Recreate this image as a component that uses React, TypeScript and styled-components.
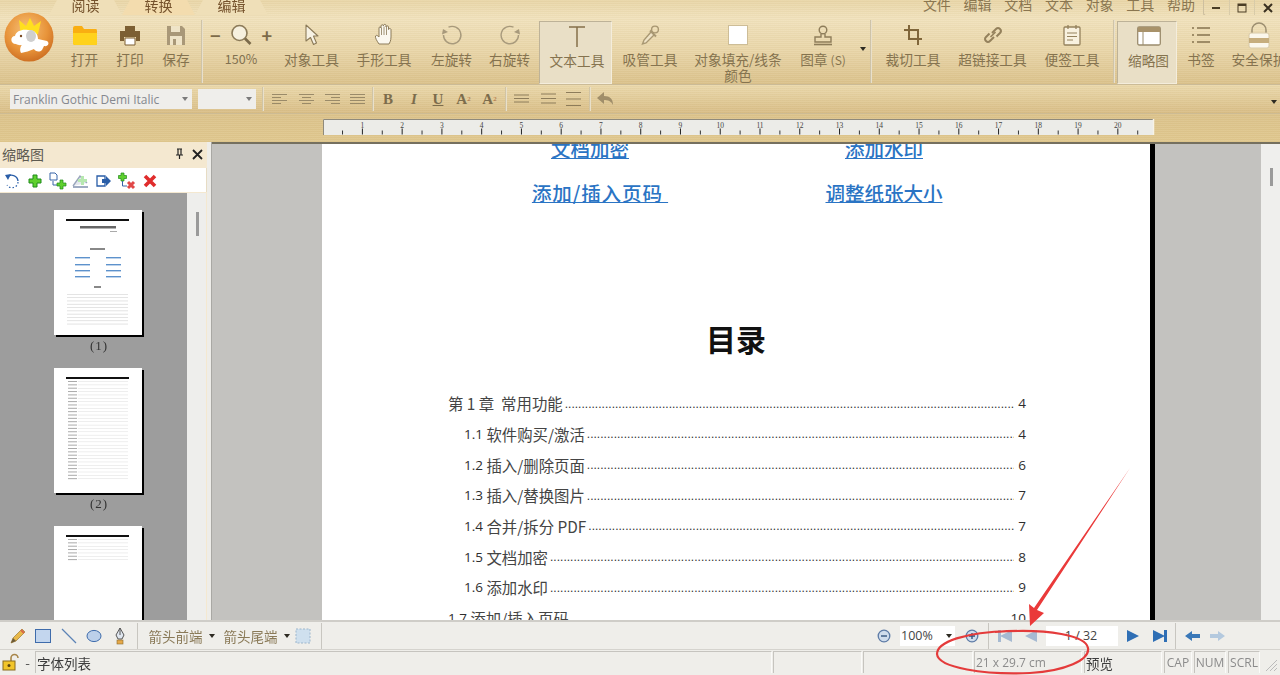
import React from "react";
import styled, { createGlobalStyle } from "styled-components";

const Global = createGlobalStyle`
  html, body { margin: 0; padding: 0; background: #efeeea; }
  body { font-family: "Noto Sans CJK SC", "Noto Sans", sans-serif; }
  * { box-sizing: border-box; }
`;

const App_ = styled.div`
  position: relative;
  width: 1280px;
  height: 675px;
  overflow: hidden;
  display: flex;
  flex-direction: column;
  filter: blur(0.45px);
`;

const stripes = `repeating-linear-gradient(180deg, rgba(255,255,255,.05) 0 1px, rgba(120,90,30,.03) 1px 2px)`;

const Ribbon = styled.div`
  height: 85px;
  flex: none;
  background: ${stripes}, linear-gradient(180deg, #e9d6a8 0%, #f1e2bd 22%, #e9d6a9 60%, #dbc28c 100%);
  border-bottom: 1px solid #cbbb97;
`;

const TabRow = styled.div`
  height: 15px;
  display: flex;
  overflow: hidden;
  padding-left: 49px;
`;

const Tab = styled.div<{ $active?: boolean }>`
  width: 73px;
  height: 15px;
  line-height: 11px;
  text-align: center;
  font-size: 14px;
  color: #75522c;
  clip-path: polygon(0 100%, 8px 0, calc(100% - 8px) 0, 100% 100%);
  background: ${(p) => (p.$active ? "#f3dcae" : "#efdfb8")};
`;

const TopMenu = styled.div`
  margin-left: auto;
  display: flex;
  gap: 12.7px;
  font-size: 14px;
  line-height: 8px;
  color: #8a7650;
  padding-right: 8px;
`;

const WindowButtons = styled.div`
  width: 77px;
  height: 16px;
  display: flex;
  border: 1px solid #cdbf9f;
  border-top: 0;
  border-right: 0;
  border-radius: 0 0 0 3px;
`;

const WindowButton = styled.div`
  flex: 1;
  display: flex;
  align-items: center;
  justify-content: center;
  border-right: 1px solid #d8cba9;
  &:last-child { border-right: 0; }
`;

const Tools = styled.div`
  height: 69px;
  display: flex;
`;

const LogoCell = styled.div`
  width: 62px;
  flex: none;
  margin-top: -3px;
  padding-left: 4px;
`;

const Tool = styled.div<{ $w: number; $active?: boolean }>`
  width: ${(p) => p.$w}px;
  flex: none;
  display: flex;
  flex-direction: column;
  align-items: center;
  padding-top: 6px;
  font-size: 13.7px;
  color: #85734f;
  white-space: nowrap;
  ${(p) =>
    p.$active
      ? `background: #e9dfc6; margin-top: 6px; border: 1.5px solid; border-color: #bdb298 #f4eddc #f4eddc #bdb298; height: 63px; padding: 0 0 0 3px;`
      : ""}
`;

const ToolIcon = styled.div`
  height: 28px;
  display: flex;
  align-items: center;
  justify-content: center;
  flex: none;
`;

const ToolLabel = styled.div`
  line-height: 16px;
  margin-top: 2px;
  text-align: center;
`;

const SmallLabelPart = styled.span`
  font-size: 12px;
`;

const ZoomLine = styled.div`
  width: 62px;
  display: flex;
  align-items: center;
  justify-content: space-between;
  font-size: 18px;
  font-weight: 700;
  color: #7d6b4a;
`;

const Percent = styled.div`
  font-size: 12.5px;
  line-height: 16px;
  margin-top: 2px;
  color: #80704f;
`;

const Divider = styled.div<{ $m?: string }>`
  width: 2px;
  flex: none;
  margin: ${(p) => p.$m || "4px 0 2px"};
  background: linear-gradient(90deg, #c2b595, #f5eedd);
`;

const Caret = styled.div`
  width: 0;
  height: 0;
  flex: none;
  border: 3px solid transparent;
  border-top: 4px solid #2d2a22;
  border-bottom: 0;
`;

const CaretCell = styled.div<{ $w: number }>`
  width: ${(p) => p.$w}px;
  flex: none;
  display: flex;
  justify-content: center;
  padding-top: 32px;
`;

const FormatBar = styled.div`
  height: 29px;
  flex: none;
  display: flex;
  align-items: center;
  padding-left: 10px;
  background: ${stripes}, linear-gradient(180deg, #ebd9ac, #d9be87);
  border-bottom: 1px solid #cdbb93;
`;

const SelectBox = styled.div<{ $w: number }>`
  width: ${(p) => p.$w}px;
  height: 20px;
  flex: none;
  display: flex;
  align-items: center;
  justify-content: space-between;
  padding: 0 4px 0 3px;
  background: #efeeeb;
  font: 12px "Open Sans", sans-serif;
  color: #85888f;
  white-space: nowrap;
  margin-right: 6px;
  ${Caret} { border-top-color: #7b7b7b; }
`;

const FormatSep = styled.div<{ $ml?: number }>`
  width: 2px;
  height: 24px;
  flex: none;
  margin-left: ${(p) => p.$ml ?? 0}px;
  background: linear-gradient(90deg, #c4b692, #f5eedd);
`;

const FormatBtn = styled.div<{ $w: number }>`
  width: ${(p) => p.$w}px;
  flex: none;
  display: flex;
  align-items: center;
  justify-content: center;
  font: 700 15px "Liberation Serif", serif;
  color: #7c6c4c;
  sup, sub { font-size: 7px; font-weight: 400; color: #a8683d; line-height: 0; }
`;

const FormatEnd = styled.div`
  margin-left: auto;
  padding: 6px 3px 0 0;
`;

const RulerStrip = styled.div`
  height: 28px;
  flex: none;
  padding: 5px 0 0 323px;
  background: ${stripes}, linear-gradient(180deg, #dcc38c, #e0c88f);
`;

const Body = styled.div`
  height: 478px;
  flex: none;
  display: flex;
  overflow: hidden;
`;

const Side = styled.div`
  width: 207px;
  flex: none;
  display: flex;
  flex-direction: column;
  background: #f4e8d0;
`;

const SideHead = styled.div`
  height: 26px;
  flex: none;
  display: flex;
  align-items: center;
  padding: 0 4px 2px 2px;
  font-size: 14px;
  color: #5d5a50;
`;

const SideHeadBtns = styled.div`
  margin-left: auto;
  display: flex;
  align-items: center;
  gap: 8px;
`;

const SideTools = styled.div`
  height: 24px;
  flex: none;
  display: flex;
  align-items: center;
  background: #fff;
  border-right: 1px solid #e7dcc4;
  margin-bottom: 1px;
  padding-top: 1px;
`;

const SideTool = styled.div`
  width: 23px;
  flex: none;
  display: flex;
  justify-content: center;
`;

const SideContent = styled.div`
  flex: 1;
  display: flex;
  min-height: 0;
`;

const ThumbList = styled.div`
  width: 187px;
  flex: none;
  background: #9d9d9d;
  overflow: hidden;
  display: flex;
  flex-direction: column;
  align-items: center;
  padding: 17px 0 0 11px;
`;

const Thumb = styled.div`
  width: 90px;
  height: 127px;
  flex: none;
  padding: 0 2px 2px 0;
  background: linear-gradient(#000, #000) 2px 2px / 100% 100% no-repeat;
  line-height: 0;
`;

const ThumbInner = styled.svg`
  display: block;
  background: #fff;
`;

const ThumbLabel = styled.div`
  height: 31px;
  width: 90px;
  flex: none;
  text-align: center;
  letter-spacing: 1px;
  font: 13px/18px "Liberation Serif", "Noto Sans CJK SC", serif;
  color: #333;
`;

const SideScroll = styled.div`
  width: 19px;
  flex: none;
  background: #eeeeec;
  padding: 19px 0 0 9px;
`;

const ScrollThumb = styled.div`
  width: 3px;
  height: 24px;
  background: #9a9a9a;
`;

const Splitter = styled.div`
  width: 5px;
  flex: none;
  background: #eeede9;
  border-right: 1px solid #a9a8a4;
`;

const Main = styled.div`
  flex: 1;
  display: flex;
  border-top: 2px solid #75705f;
  min-width: 0;
`;

const DocArea = styled.div`
  flex: 1;
  background: #c3c2bf;
  padding-left: 110px;
  overflow: hidden;
`;

const DocPage = styled.div`
  width: 833px;
  height: 100%;
  background: #fff;
  border-right: 5px solid #000;
  overflow: hidden;
`;

const LinkGrid = styled.div`
  display: grid;
  grid-template-columns: 296px 292px;
  row-gap: 16px;
  margin: -9px 0 0 120px;
`;

const DocLink = styled.div<{ $shift?: boolean }>`
  height: 28px;
  line-height: 27px;
  text-align: center;
  font-size: 19.5px;
  font-weight: 500;
  color: #2a74c4;
  text-decoration: underline;
  white-space: pre;
  ${(p) => (p.$shift ? "padding-left: 20px; letter-spacing: 0.9px;" : "")}
`;

const DocTitle = styled.div`
  height: 40px;
  margin-top: 111px;
  text-align: center;
  line-height: 40px;
  font-size: 30px;
  font-weight: 700;
  color: #111;
`;

const Toc = styled.div`
  margin: 30px 0 0 126px;
  width: 578px;
`;

const TocRow = styled.div<{ $indent?: boolean }>`
  height: 30.65px;
  display: flex;
  align-items: center;
  padding-left: ${(p) => (p.$indent ? 16 : 0)}px;
  font-size: 15.4px;
  font-weight: 400;
  color: #444;
  white-space: pre;
`;

const TocNum = styled.span`
  font-family: "Open Sans", sans-serif;
  font-weight: 400;
  font-size: 13.5px;
  color: #2e2e2e;
`;

const Leader = styled.div`
  flex: 1;
  min-width: 0;
  overflow: hidden;
  margin: 0 4px 0 2px;
  font: 12px "Liberation Sans", sans-serif;
  color: #333;
  letter-spacing: 0.02px;
  padding-top: 1px;
`;

const DocScroll = styled.div`
  width: 19px;
  flex: none;
  background: #efefed;
  padding: 24px 0 0 9px;
`;

const DocScrollThumb = styled.div`
  width: 3px;
  height: 18px;
  background: #9a9a9a;
`;

const BottomBar = styled.div`
  height: 30px;
  flex: none;
  display: flex;
  align-items: center;
  padding: 0 51px 0 5px;
  background: #efeeea;
  border-top: 2px solid #cfcdc8;
  border-bottom: 1px solid #d5d3ce;
`;

const BarIcon = styled.div<{ $w?: number }>`
  width: ${(p) => p.$w || 25.5}px;
  flex: none;
  display: flex;
  align-items: center;
  justify-content: center;
`;

const BarSep = styled.div<{ $m?: string }>`
  width: 1px;
  height: 26px;
  flex: none;
  margin: ${(p) => p.$m || "0"};
  background: #c8c6c0;
`;

const BarText = styled.div<{ $w: number; $ml: number }>`
  width: ${(p) => p.$w}px;
  flex: none;
  margin-left: ${(p) => p.$ml}px;
  display: flex;
  align-items: center;
  justify-content: space-between;
  font-size: 13.5px;
  color: #8a7a58;
  white-space: nowrap;
`;

const BarSpacer = styled.div`
  flex: 1;
`;

const WhiteField = styled.div<{ $w: number; $center?: boolean; $m?: string }>`
  width: ${(p) => p.$w}px;
  height: 20px;
  flex: none;
  display: flex;
  align-items: center;
  justify-content: ${(p) => (p.$center ? "center" : "space-between")};
  padding: 0 3px 0 1px;
  margin: ${(p) => p.$m || "0"};
  background: #fff;
  font: 12.5px "Open Sans", sans-serif;
  color: #444;
`;

const StatusBar = styled.div`
  height: 24px;
  flex: none;
  display: flex;
  align-items: center;
  padding-left: 2px;
  background: #efeeea;
  font-size: 13.5px;
`;

const StatusLock = styled.div`
  width: 18px;
  flex: none;
  display: flex;
`;

const StatusDash = styled.div`
  width: 15px;
  flex: none;
  color: #555;
  text-align: center;
`;

const StatusCell = styled.div<{ $w: number; $m?: number; $muted?: boolean; $center?: boolean }>`
  width: ${(p) => p.$w}px;
  height: 22px;
  flex: none;
  margin-right: ${(p) => p.$m ?? 1}px;
  display: flex;
  align-items: center;
  padding-left: ${(p) => (p.$center ? 0 : 1)}px;
  justify-content: ${(p) => (p.$center ? "center" : "flex-start")};
  border-left: 1px solid #c6c4bf;
  border-top: 1px solid #c6c4bf;
  border-right: 1px solid #fbfbf9;
  color: ${(p) => (p.$muted ? "#8b8b8b" : "#3c3c3c")};
  font-family: ${(p) => (p.$muted ? '"Open Sans", sans-serif' : '"Noto Sans CJK SC", sans-serif')};
  font-size: ${(p) => (p.$muted ? 12 : 13.5)}px;
  white-space: nowrap;
`;

const Grip = styled.svg`
  margin-left: 2px;
  flex: none;
`;

const Annotation = styled.svg`
  position: absolute;
  left: 0;
  top: 0;
  pointer-events: none;
`;

const S = ({ w = 24, h = 24, children }: { w?: number; h?: number; children: React.ReactNode }) => (
  <svg width={w} height={h} viewBox={`0 0 ${w} ${h}`} fill="none">{children}</svg>
);

const Logo = () => (
  <svg width="50" height="50" viewBox="0 0 50 50">
    <defs>
      <radialGradient id="lg" cx="45%" cy="35%" r="70%">
        <stop offset="0%" stopColor="#f6c27a" />
        <stop offset="60%" stopColor="#e8943a" />
        <stop offset="100%" stopColor="#c9691f" />
      </radialGradient>
    </defs>
    <circle cx="25" cy="25" r="24.5" fill="url(#lg)" />
    <path d="M17 24 L15 8 L22 14 L26 6 L30 14 L37 9 L34 22 Z" fill="#ffdf1f" />
    <path d="M12 32 C6 32 6 24 11 24 C12 19 18 17 24 18 C31 18 34 22 34 27 L43 29 C46 31 44 35 40 34 L38 38 C35 41 31 39 30 37 C26 39 21 40 17 41 C15 37 17 33 19 32 C17 34 14 33 12 32Z" fill="#fff" />
    <ellipse cx="27" cy="24" rx="5" ry="6" fill="#cfcfcf" />
    <circle cx="17" cy="24" r="1.2" fill="#7a4a22" />
  </svg>
);

const Folder = () => (
  <S w={26} h={24}>
    <path d="M1 5 Q1 3 3 3 H10 L12 6 H24 Q25 6 25 8 V21 Q25 22 23 22 H3 Q1 22 1 20Z" fill="#f9ae12" />
    <path d="M1 10 H25 V21 Q25 22 23 22 H3 Q1 22 1 20Z" fill="#ffd21c" />
  </S>
);
const Printer = () => (
  <S w={22} h={24}>
    <path d="M6 3 H16 V8 H6Z" fill="#7c5f33" />
    <path d="M1 8 H21 V18 H17 V14 H5 V18 H1Z" fill="#7c5f33" />
    <path d="M6 15 H16 V22 H6Z" fill="#fff" stroke="#7c5f33" />
  </S>
);
const Save = () => (
  <S w={20} h={24}>
    <path d="M1 3 H16 L19 6 V22 H1Z" fill="#a99878" />
    <path d="M5 3 H14 V9 H5Z" fill="#efe4c8" />
    <path d="M4 13 H16 V22 H4Z" fill="#efe4c8" />
    <path d="M7 16 H10 V22 H7Z" fill="#a99878" />
  </S>
);
const Magnifier = () => (
  <S w={22} h={24}>
    <circle cx="9.5" cy="10" r="7.5" fill="#f6f0de" stroke="#8b7a58" strokeWidth="1.6" />
    <path d="M15 15.5 L20.5 21" stroke="#7b6a4a" strokeWidth="2.6" />
  </S>
);
const Cursor = () => (
  <S w={16} h={22}>
    <path d="M2 1 L14 12 H9.5 L12.5 19 L9.5 20.5 L6.5 13.5 L2 17Z" fill="#f7f2e4" stroke="#8b7a58" strokeWidth="1.1" strokeLinejoin="round" />
  </S>
);
const HandIcon = () => (
  <S w={20} h={24}>
    <path d="M5 21 C3 18 1 15 1.5 13 C2.5 11.5 4 13 5 14 V5 C5 3.5 7 3.5 7 5 V3 C7 1.3 9.5 1.3 9.5 3 V2.5 C9.5 1 12 1 12 2.5 V4 C12 2.5 14.5 2.5 14.5 4 V6.5 C14.5 5.3 17 5.3 17 6.5 V14 C17 18 15.5 20 15 21Z" fill="#fbf8ef" stroke="#8b7a58" strokeWidth="1" />
    <path d="M7.5 5V12M10 3.5V12M12.5 4V12" stroke="#8b7a58" strokeWidth=".8" />
  </S>
);
const Rotate = ({ right }: { right?: boolean }) => (
  <S w={22} h={22}>
    <g transform={right ? "translate(22,0) scale(-1,1)" : undefined}>
      <path d="M7.5 3.2 A8.7 8.7 0 1 1 2.5 11" stroke="#a89a7c" strokeWidth="1.4" />
      <path d="M2 5 L7 8 L1 10.5Z" fill="#a89a7c" />
    </g>
  </S>
);
const TextT = () => (
  <S w={18} h={24}>
    <path d="M1 3 H17 M9 3 V23" stroke="#85704a" strokeWidth="1.5" />
  </S>
);
const Dropper = () => (
  <S w={20} h={22}>
    <path d="M11 8 L4 16 L2.5 20 L6 19 L14 11" stroke="#a89772" strokeWidth="1.4" fill="#efe3c6" />
    <circle cx="15" cy="5.5" r="3.4" fill="none" stroke="#a89772" strokeWidth="1.4" />
    <path d="M10 6.5 L16 12.5" stroke="#a89772" strokeWidth="2" />
  </S>
);
const Square = () => (
  <S w={20} h={20}>
    <rect x=".5" y=".5" width="19" height="19" fill="#fff" stroke="#cdbd97" />
  </S>
);
const StampIcon = () => (
  <S w={20} h={22}>
    <circle cx="10" cy="6" r="3.8" stroke="#8e7d5a" strokeWidth="1.4" />
    <path d="M8 10 V13 H2 V18 H18 V13 H12 V10" stroke="#8e7d5a" strokeWidth="1.4" />
    <path d="M1 20.5 H19" stroke="#8e7d5a" strokeWidth="1.6" />
  </S>
);
const CropIcon = () => (
  <S w={20} h={22}>
    <path d="M6 1 V15 H19 M1 6 H15 V21" stroke="#80663a" strokeWidth="2" />
  </S>
);
const LinkIcon = () => (
  <S w={20} h={22}>
    <path d="M9 9 L13 5 Q15 3 17 5 Q19 7 17 9 L13.5 12.5 M11 13 L7 17 Q5 19 3 17 Q1 15 3 13 L6.5 9.5" stroke="#94815c" strokeWidth="2" />
    <path d="M7.5 13 L12.5 8" stroke="#94815c" strokeWidth="1.6" />
  </S>
);
const NoteIcon = () => (
  <S w={18} h={22}>
    <rect x="1" y="3" width="16" height="18" rx="1" fill="#f8f1df" stroke="#94815c" strokeWidth="1.3" />
    <path d="M5 1 V5 M13 1 V5" stroke="#94815c" strokeWidth="1.3" />
    <path d="M4 9 H14 M4 12.5 H14 M4 16 H10" stroke="#94815c" />
  </S>
);
const PanelIcon = () => (
  <S w={24} h={22}>
    <rect x=".7" y="2" width="22.6" height="18" rx="1.5" fill="#fff" stroke="#9b8c6d" strokeWidth="1.3" />
    <rect x="1" y="2" width="22" height="5" fill="#a8926a" />
    <path d="M6 7 V20" stroke="#9b8c6d" />
  </S>
);
const ListIcon = () => (
  <S w={20} h={20}>
    <path d="M1 3h2M6 3h13M1 10h2M6 10h13M1 17h2M6 17h13" stroke="#85734f" strokeWidth="1.4" />
  </S>
);
const LockIcon = () => (
  <S w={24} h={28}>
    <path d="M5 13 V9 A7 7 0 0 1 19 9 V13" stroke="#9c8e70" strokeWidth="1.5" />
    <rect x="2" y="12" width="20" height="15" rx="2" fill="#fbf7ec" stroke="#d8c9a6" />
    <rect x="2" y="17" width="20" height="5" fill="#c6ad7d" />
  </S>
);
const AlignIcon = ({ kind }: { kind: "l" | "c" | "r" | "j" }) => {
  const rows: [number, number][] =
    kind === "l" ? [[0, 15], [0, 9], [0, 15], [0, 9]]
    : kind === "c" ? [[0, 15], [3, 12], [0, 15], [3, 12]]
    : kind === "r" ? [[0, 15], [6, 15], [0, 15], [6, 15]]
    : [[0, 15], [0, 15], [0, 15], [0, 15]];
  return (
    <S w={15} h={14}>
      {rows.map(([a, b], i) => (
        <path key={i} d={`M${a} ${2.5 + i * 3}H${b}`} stroke="#9a8a68" />
      ))}
    </S>
  );
};
const SpacingIcon = ({ gap, top }: { gap: number; top: number }) => (
  <S w={16} h={16}>
    {[0, 1, 2].map((i) => (
      <path key={i} d={`M0 ${top + i * gap}H15`} stroke="#8d7c5a" />
    ))}
  </S>
);
const Undo = () => (
  <S w={20} h={18}>
    <path d="M8 2 L1 8 L8 14 V10 C12 10 15 11 17 15 C17 9 14 6 8 6Z" fill="#a08e6a" />
  </S>
);

const Ruler = () => {
  const ticks: React.ReactNode[] = [];
  const unit = 39.76;
  for (let i = 0; i <= 20; i++) {
    const x = 39.4 + (i - 1) * unit;
    if (i >= 1) {
      ticks.push(<path key={`m${i}`} d={`M${x} 9.5V15.5`} stroke="#222" strokeWidth="1" />);
      ticks.push(
        <text key={`t${i}`} x={x} y={8.5} fontSize="7.5" textAnchor="middle" fill="#444" fontFamily="Liberation Serif, serif">
          {i}
        </text>
      );
    }
    const h = x + unit / 2;
    if (h < 825) ticks.push(<path key={`h${i}`} d={`M${h} 11.5V15.5`} stroke="#333" strokeWidth="1" />);
  }
  return (
    <svg width="832" height="17" viewBox="0 0 832 17" style={{ display: "block" }}>
      <rect x="0" y="0" width="830" height="16" fill="#ecece8" />
      <path d="M.5 16V.5H830" stroke="#8f8a7c" fill="none" />
      <path d="M830.5 0V16" stroke="#f7f3e6" strokeWidth="1.5" />
      {ticks}
    </svg>
  );
};

const Thumb1 = () => {
  const toc = Array.from({ length: 10 }, (_, i) => 84 + i * 3.3);
  return (
    <ThumbInner width="88" height="125" viewBox="0 0 88 125">
      <rect x="12" y="9" width="63" height="2" fill="#111" />
      <rect x="26" y="16" width="36" height="2.5" fill="#666" />
      <rect x="56" y="21" width="7" height="1" fill="#aaa" />
      <rect x="36" y="38" width="15" height="2" fill="#888" />
      {[47, 54, 60, 66].map((y) => (
        <g key={y}>
          <rect x="21" y={y} width="15" height="1.4" fill="#5d92cc" />
          <rect x="52" y={y} width="15" height="1.4" fill="#5d92cc" />
        </g>
      ))}
      <rect x="40" y="76" width="7" height="2" fill="#888" />
      {toc.map((y) => (
        <rect key={y} x="13" y={y} width="61" height=".7" fill="#d8d8d8" />
      ))}
    </ThumbInner>
  );
};

const ThumbRows = ({ rows }: { rows: number }) => (
  <ThumbInner width="88" height="125" viewBox="0 0 88 125">
    <rect x="12" y="9" width="63" height="2" fill="#111" />
    {Array.from({ length: rows }, (_, i) => (
      <g key={i}>
        <rect x="14" y={13 + i * 3.35} width="9" height="1" fill="#aaa" />
        <rect x="24" y={13.3 + i * 3.35} width="50" height=".5" fill="#ddd" />
      </g>
    ))}
  </ThumbInner>
);

const tools1 = [
  { w: 45, label: "打开", icon: <Folder /> },
  { w: 46, label: "打印", icon: <Printer /> },
  { w: 46, label: "保存", icon: <Save /> },
];

const tocRows: { num?: string; text: string; page: string; indent?: boolean }[] = [
  { text: "第 1 章  常用功能", page: "4" },
  { num: "1.1", text: " 软件购买/激活", page: "4", indent: true },
  { num: "1.2", text: " 插入/删除页面", page: "6", indent: true },
  { num: "1.3", text: " 插入/替换图片", page: "7", indent: true },
  { num: "1.4", text: " 合并/拆分 PDF", page: "7", indent: true },
  { num: "1.5", text: " 文档加密", page: "8", indent: true },
  { num: "1.6", text: " 添加水印", page: "9", indent: true },
  { num: "1.7", text: " 添加/插入页码", page: "10" },
];

const dots = ".".repeat(220);

const RoundBtn = ({ sign }: { sign: string }) => (
  <S w={14} h={14}>
    <circle cx="7" cy="7" r="5.8" fill="#cfdcec" stroke="#5d7ba6" strokeWidth="1.3" />
    <path d={sign === "+" ? "M4 7H10M7 4V10" : "M4 7H10"} stroke="#33547f" strokeWidth="1.4" />
  </S>
);

const NavArrow = ({ dir, bar, on }: { dir: "l" | "r"; bar?: boolean; on?: boolean }) => {
  const c = on ? "#2f6fb5" : "#a6bad2";
  const a = dir === "r" ? "M3 2L15 8L3 14Z" : "M15 2L3 8L15 14Z";
  return (
    <S w={18} h={16}>
      <path d={a} fill={c} />
      {bar && <rect x={dir === "r" ? 14 : 1} y="2" width="3" height="12" fill={c} />}
    </S>
  );
};

const Step = ({ dir, on }: { dir: "l" | "r"; on?: boolean }) => {
  const c = on ? "#3a78b8" : "#b4c9de";
  const d = dir === "l" ? "M1 7L8 2V5H16V9H8V12Z" : "M16 7L9 2V5H1V9H9V12Z";
  return (
    <S w={17} h={14}>
      <path d={d} fill={c} />
    </S>
  );
};

export default function App() {
  return (
    <>
      <Global />
      <App_>
        <Ribbon>
          <TabRow>
            <Tab>阅读</Tab>
            <Tab $active>转换</Tab>
            <Tab>编辑</Tab>
            <TopMenu>
              {["文件", "编辑", "文档", "文本", "对象", "工具", "帮助"].map((m) => (
                <span key={m}>{m}</span>
              ))}
            </TopMenu>
            <WindowButtons>
              <WindowButton><S w={10} h={10}><path d="M1 5H9" stroke="#4a3d25" strokeWidth="2" /></S></WindowButton>
              <WindowButton><S w={10} h={10}><rect x="1" y="1" width="8" height="8" stroke="#4a3d25" /><path d="M1 2H9" stroke="#4a3d25" strokeWidth="2" /></S></WindowButton>
              <WindowButton><S w={10} h={10}><path d="M1 1L9 9M9 1L1 9" stroke="#3a3020" strokeWidth="2" /></S></WindowButton>
            </WindowButtons>
          </TabRow>
          <Tools>
            <LogoCell><Logo /></LogoCell>
            {tools1.map((t) => (
              <Tool key={t.label} $w={t.w}>
                <ToolIcon>{t.icon}</ToolIcon>
                <ToolLabel>{t.label}</ToolLabel>
              </Tool>
            ))}
            <Divider $m="5px 1px 1px 2px" />
            <Tool $w={74}>
              <ToolIcon>
                <ZoomLine>
                  <span>−</span>
                  <Magnifier />
                  <span>+</span>
                </ZoomLine>
              </ToolIcon>
              <Percent>150%</Percent>
            </Tool>
            <Tool $w={67}><ToolIcon><Cursor /></ToolIcon><ToolLabel>对象工具</ToolLabel></Tool>
            <Tool $w={78}><ToolIcon><HandIcon /></ToolIcon><ToolLabel>手形工具</ToolLabel></Tool>
            <Tool $w={57}><ToolIcon><Rotate /></ToolIcon><ToolLabel>左旋转</ToolLabel></Tool>
            <Tool $w={59}><ToolIcon><Rotate right /></ToolIcon><ToolLabel>右旋转</ToolLabel></Tool>
            <Tool $w={73} $active><ToolIcon><TextT /></ToolIcon><ToolLabel>文本工具</ToolLabel></Tool>
            <Tool $w={76}><ToolIcon><Dropper /></ToolIcon><ToolLabel>吸管工具</ToolLabel></Tool>
            <Tool $w={100}><ToolIcon><Square /></ToolIcon><ToolLabel>对象填充/线条<br />颜色</ToolLabel></Tool>
            <Tool $w={70}><ToolIcon><StampIcon /></ToolIcon><ToolLabel>图章 <SmallLabelPart>(S)</SmallLabelPart></ToolLabel></Tool>
            <CaretCell $w={10}><Caret /></CaretCell>
            <Divider $m="5px 1px 1px 2px" />
            <Tool $w={80}><ToolIcon><CropIcon /></ToolIcon><ToolLabel>裁切工具</ToolLabel></Tool>
            <Tool $w={79}><ToolIcon><LinkIcon /></ToolIcon><ToolLabel>超链接工具</ToolLabel></Tool>
            <Tool $w={80}><ToolIcon><NoteIcon /></ToolIcon><ToolLabel>便签工具</ToolLabel></Tool>
            <Divider $m="5px 2px 1px 1px" />
            <Tool $w={60} $active><ToolIcon><PanelIcon /></ToolIcon><ToolLabel>缩略图</ToolLabel></Tool>
            <Tool $w={48}><ToolIcon><ListIcon /></ToolIcon><ToolLabel>书签</ToolLabel></Tool>
            <Tool $w={68}><ToolIcon><LockIcon /></ToolIcon><ToolLabel>安全保护</ToolLabel></Tool>
          </Tools>
        </Ribbon>

        <FormatBar>
          <SelectBox $w={182}>Franklin Gothic Demi Italic<Caret /></SelectBox>
          <SelectBox $w={58}><span /><Caret /></SelectBox>
          <FormatSep />
          <FormatBtn $w={30}><AlignIcon kind="l" /></FormatBtn>
          <FormatBtn $w={25}><AlignIcon kind="c" /></FormatBtn>
          <FormatBtn $w={26}><AlignIcon kind="r" /></FormatBtn>
          <FormatBtn $w={25}><AlignIcon kind="j" /></FormatBtn>
          <FormatSep $ml={2} />
          <FormatBtn $w={28}>B</FormatBtn>
          <FormatBtn $w={24}><i>I</i></FormatBtn>
          <FormatBtn $w={24}><u>U</u></FormatBtn>
          <FormatBtn $w={27}>A<sup>2</sup></FormatBtn>
          <FormatBtn $w={25}>A<sub>2</sub></FormatBtn>
          <FormatSep $ml={3} />
          <FormatBtn $w={29}><SpacingIcon gap={3.5} top={4} /></FormatBtn>
          <FormatBtn $w={25}><SpacingIcon gap={4.5} top={3} /></FormatBtn>
          <FormatBtn $w={25}><SpacingIcon gap={6.5} top={1.5} /></FormatBtn>
          <FormatSep $ml={3} />
          <FormatBtn $w={30}><Undo /></FormatBtn>
          <FormatEnd><Caret /></FormatEnd>
        </FormatBar>

        <RulerStrip><Ruler /></RulerStrip>

        <Body>
          <Side>
            <SideHead>
              缩略图
              <SideHeadBtns>
                <S w={10} h={12}><path d="M3 1H8M4 1V7H7V1M2 7H9M5.5 7V11" stroke="#222" strokeWidth="1.2" /></S>
                <S w={11} h={11}><path d="M1 1L10 10M10 1L1 10" stroke="#222" strokeWidth="1.8" /></S>
              </SideHeadBtns>
            </SideHead>
            <SideTools>
              <SideTool><S w={16} h={16}><path d="M3 4 A6.5 6.5 0 0 1 14 8" stroke="#2a5ea8" strokeWidth="1.4" /><path d="M14 9 A6 6 0 0 1 3 12" stroke="#2a5ea8" strokeWidth="1.2" strokeDasharray="1.5 2" /><path d="M1 2 L7 1 L4 7Z" fill="#2a5ea8" /></S></SideTool>
              <SideTool><S w={14} h={14}><path d="M5 1H9V5H13V9H9V13H5V9H1V5H5Z" fill="#5fd02e" stroke="#1f8a1a" /></S></SideTool>
              <SideTool><S w={18} h={18}><path d="M1 1H6L8 3V8H1Z" fill="#fff" stroke="#3864a8" /><path d="M4 9V13H8" stroke="#3864a8" /><path d="M11 8H14V11H17V14H14V17H11V14H8V11H11Z" fill="#5fd02e" stroke="#1f8a1a" strokeWidth=".7" /></S></SideTool>
              <SideTool><S w={18} h={16}><path d="M1 13L8 3L15 10" stroke="#9aa6bc" strokeWidth="1.4" fill="#e4e7ee" /><path d="M1 14H16" stroke="#7f8fae" strokeWidth="1.5" /><path d="M9 3H12V6H15V9H12V12H9V9H6V6H9Z" fill="#b7e8b0" /></S></SideTool>
              <SideTool><S w={16} h={14}><path d="M1 2H9V12H1Z" stroke="#2a5ea8" strokeWidth="1.3" /><path d="M6 5H10V2L15 7L10 12V9H6Z" fill="#2a5ea8" /></S></SideTool>
              <SideTool><S w={18} h={18}><path d="M3 1H6V3.5H8.5V6.5H6V9H3V6.5H.5V3.5H3Z" fill="#5fd02e" stroke="#1f8a1a" strokeWidth=".7" /><path d="M4.5 9V14H9" stroke="#3864a8" /><path d="M10 10L16 16M16 10L10 16" stroke="#e14848" strokeWidth="3" /></S></SideTool>
              <SideTool><S w={14} h={14}><path d="M2 2L12 12M12 2L2 12" stroke="#e02c2c" strokeWidth="3.6" /></S></SideTool>
            </SideTools>
            <SideContent>
              <ThumbList>
                <Thumb><Thumb1 /></Thumb>
                <ThumbLabel>(1)</ThumbLabel>
                <Thumb><ThumbRows rows={30} /></Thumb>
                <ThumbLabel>(2)</ThumbLabel>
                <Thumb><ThumbRows rows={7} /></Thumb>
              </ThumbList>
              <SideScroll><ScrollThumb /></SideScroll>
            </SideContent>
          </Side>
          <Splitter />
          <Main>
            <DocArea>
              <DocPage>
                <LinkGrid>
                  <DocLink>文档加密</DocLink>
                  <DocLink>添加水印</DocLink>
                  <DocLink $shift>{"添加/插入页码 "}</DocLink>
                  <DocLink>调整纸张大小</DocLink>
                </LinkGrid>
                <DocTitle>目录</DocTitle>
                <Toc>
                  {tocRows.map((r) => (
                    <TocRow key={r.text} $indent={r.indent}>
                      {r.num && <TocNum>{r.num}</TocNum>}
                      {r.text}
                      <Leader>{dots}</Leader>
                      <TocNum>{r.page}</TocNum>
                    </TocRow>
                  ))}
                </Toc>
              </DocPage>
            </DocArea>
            <DocScroll><DocScrollThumb /></DocScroll>
          </Main>
        </Body>

        <BottomBar>
          <BarIcon><S w={18} h={18}><path d="M2 16L4 11L13 2L16 5L7 14Z" fill="#e9b949" stroke="#9a7a3a" strokeWidth=".7" /><path d="M2 16L4 11L7 14Z" fill="#6b5a3a" /><path d="M12 3L15 6" stroke="#d86a4a" strokeWidth="2" /></S></BarIcon>
          <BarIcon><S w={16} h={14}><rect x=".5" y=".5" width="15" height="13" fill="#c3d6ee" stroke="#3f6cab" /></S></BarIcon>
          <BarIcon><S w={16} h={16}><path d="M1 1L15 15" stroke="#5b83b5" strokeWidth="1.2" /></S></BarIcon>
          <BarIcon><S w={16} h={14}><ellipse cx="8" cy="7" rx="7" ry="5.6" fill="#bcd0ea" stroke="#3f6cab" /></S></BarIcon>
          <BarIcon><S w={12} h={18}><path d="M6 1L10 8L8 12H4L2 8Z" fill="#dfe6ef" stroke="#555" /><path d="M6 1V8" stroke="#555" /><rect x="3" y="13" width="6" height="4" fill="#e6a94a" stroke="#8a6b2c" strokeWidth=".6" /></S></BarIcon>
          <BarSep $m="0 0 0 4px" />
          <BarText $w={66} $ml={11}>箭头前端<Caret /></BarText>
          <BarText $w={66} $ml={9}>箭头尾端<Caret /></BarText>
          <BarIcon $w={26}><S w={16} h={16}><rect x="1" y="1" width="14" height="14" fill="#cfe0ee" stroke="#9db6cc" strokeDasharray="2 1.5" /></S></BarIcon>
          <BarSep $m="0 0 0 5px" />
          <BarSpacer />
          <BarIcon $w={24}><RoundBtn sign="-" /></BarIcon>
          <WhiteField $w={55} $m="0 5px 0 4px">100%<Caret /></WhiteField>
          <BarIcon $w={24}><RoundBtn sign="+" /></BarIcon>
          <BarSep $m="0 4px 0 4px" />
          <BarIcon $w={25}><NavArrow dir="l" bar /></BarIcon>
          <BarIcon $w={26}><NavArrow dir="l" /></BarIcon>
          <WhiteField $w={72} $center $m="0 2px 0 2px">1 / 32</WhiteField>
          <BarIcon $w={26}><NavArrow dir="r" on /></BarIcon>
          <BarIcon $w={26}><NavArrow dir="r" bar on /></BarIcon>
          <BarSep $m="0 4px 0 3px" />
          <BarIcon $w={25}><Step dir="l" on /></BarIcon>
          <BarIcon $w={24}><Step dir="r" /></BarIcon>
        </BottomBar>

        <StatusBar>
          <StatusLock>
            <S w={18} h={18}><path d="M9 9V5A3.5 3.5 0 0 1 16 5" stroke="#a8864a" strokeWidth="1.6" /><rect x="1" y="8" width="12" height="9" fill="#f2c52a" stroke="#8a6b1c" /><circle cx="7" cy="12.5" r="1.5" fill="#5a4410" /></S>
          </StatusLock>
          <StatusDash>-</StatusDash>
          <StatusCell $w={737} $m={1}>字体列表</StatusCell>
          <StatusCell $w={89} $m={1} />
          <StatusCell $w={110} $m={1} />
          <StatusCell $w={108} $m={2} $muted>21 x 29.7 cm</StatusCell>
          <StatusCell $w={78} $m={2}>预览</StatusCell>
          <StatusCell $w={28} $m={2} $muted $center>CAP</StatusCell>
          <StatusCell $w={32} $m={2} $muted $center>NUM</StatusCell>
          <StatusCell $w={32} $m={2} $muted $center>SCRL</StatusCell>
          <Grip width="14" height="20" viewBox="0 0 14 20"><path d="M2 19L13 8M6 19L13 12M10 19L13 16" stroke="#bbb" /></Grip>
        </StatusBar>

        <Annotation width="1280" height="675" viewBox="0 0 1280 675">
          <path d="M1130 468 L1037 610 L1044 613 L1030 626 L1029 604 L1034 608 Z" fill="#ea3a3a" />
          <path d="M1010 631 C965 632 937 642 937 654 C938 668 985 675 1030 673 C1065 671 1090 660 1088 648 C1086 636 1050 628 995 632" stroke="#e43b3b" strokeWidth="2.2" fill="none" />
        </Annotation>
      </App_>
    </>
  );
}
